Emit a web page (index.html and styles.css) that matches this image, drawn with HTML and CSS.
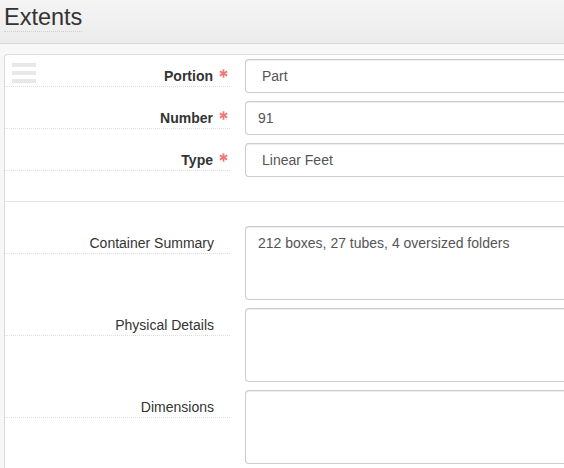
FILE: index.html
```html
<!DOCTYPE html>
<html lang="en">
<head>
<meta charset="utf-8">
<title>Extents</title>
<link rel="stylesheet" href="styles.css">
</head>
<body>
<header class="page-header">
  <h1 class="title"><span class="title-text">Extents</span></h1>
</header>
<main class="panel">
  <div class="drag-handle" aria-hidden="true">
    <span class="bar"></span><span class="bar"></span><span class="bar"></span>
  </div>
  <section class="group group-required">
    <div class="row">
      <label class="label label-required" for="portion">Portion<svg class="req" viewBox="0 0 10 10"><g stroke="currentColor" stroke-width="2"><line x1="5" y1="0.3" x2="5" y2="9.7"/><line x1="0.9" y1="2.65" x2="9.1" y2="7.35"/><line x1="0.9" y1="7.35" x2="9.1" y2="2.65"/></g></svg></label>
      <div class="control select-like" id="portion">Part</div>
    </div>
    <div class="row">
      <label class="label label-required" for="number">Number<svg class="req" viewBox="0 0 10 10"><g stroke="currentColor" stroke-width="2"><line x1="5" y1="0.3" x2="5" y2="9.7"/><line x1="0.9" y1="2.65" x2="9.1" y2="7.35"/><line x1="0.9" y1="7.35" x2="9.1" y2="2.65"/></g></svg></label>
      <div class="control" id="number">91</div>
    </div>
    <div class="row">
      <label class="label label-required" for="type">Type<svg class="req" viewBox="0 0 10 10"><g stroke="currentColor" stroke-width="2"><line x1="5" y1="0.3" x2="5" y2="9.7"/><line x1="0.9" y1="2.65" x2="9.1" y2="7.35"/><line x1="0.9" y1="7.35" x2="9.1" y2="2.65"/></g></svg></label>
      <div class="control select-like" id="type">Linear Feet</div>
    </div>
  </section>
  <section class="group group-details">
    <div class="row">
      <label class="label" for="summary">Container Summary</label>
      <div class="control area" id="summary">212 boxes, 27 tubes, 4 oversized folders</div>
    </div>
    <div class="row">
      <label class="label" for="physical">Physical Details</label>
      <div class="control area" id="physical"></div>
    </div>
    <div class="row row-last">
      <label class="label" for="dimensions">Dimensions</label>
      <div class="control area" id="dimensions"></div>
    </div>
  </section>
</main>
</body>
</html>
```
FILE: styles.css
```css
html, body {
  margin: 0;
  padding: 0;
}
body {
  background: #f7f7f7;
  font-family: "Liberation Sans", Arial, sans-serif;
  font-size: 14px;
  line-height: 20px;
  color: #333;
  overflow: hidden;
  width: 564px;
  height: 468px;
}
.page-header {
  height: 43px;
  width: 560px;
  border-bottom: 1px solid #d9d9d9;
  background: linear-gradient(#f4f4f4, #ececec);
  padding-left: 4px;
}
.title {
  margin: 0;
  padding-top: 4px;
  font-weight: normal;
  font-size: 23.5px;
  line-height: 27px;
  color: #333;
}
.title-text {
  display: inline-block;
  border-bottom: 1px dotted #cfcfcf;
}
.panel {
  position: relative;
  box-sizing: border-box;
  margin: 10px 0 0 4px;
  width: 560px;
  height: 414px;
  background: #fff;
  border: 1px solid #dcdcdc;
  border-right: none;
  border-bottom: none;
  border-radius: 4px 0 0 0;
  padding-top: 4px;
  overflow: hidden;
}
.drag-handle {
  position: absolute;
  left: 7px;
  top: 8px;
  display: flex;
  flex-direction: column;
  gap: 4px;
}
.bar {
  display: block;
  width: 24px;
  height: 4px;
  background: #e8e8e8;
}
.group-required {
  padding-bottom: 16px;
  border-bottom: 1px solid #e5e5e5;
}
.group-details {
  padding-top: 24px;
}
.row {
  display: grid;
  grid-template-columns: 225px 1fr;
  column-gap: 15px;
  align-items: start;
  margin-bottom: 8px;
}
.row-last {
  margin-bottom: 0;
}
.label {
  display: block;
  padding: 7px 16px 0 0;
  text-align: right;
  border-bottom: 1px dotted #dedede;
  line-height: 20px;
  color: #333;
}
.label-required {
  font-weight: bold;
  padding-right: 2px;
}
.req {
  display: inline-block;
  vertical-align: top;
  width: 9px;
  height: 9px;
  margin: 3px 0 0 6px;
  color: #ee7a77;
}
.control {
  box-sizing: border-box;
  height: 34px;
  padding: 6px 12px;
  border: 1px solid #ccc;
  border-right: none;
  border-radius: 4px 0 0 4px;
  box-shadow: inset 0 1px 1px rgba(0, 0, 0, 0.075);
  background: #fff;
  color: #555;
  line-height: 20px;
  white-space: nowrap;
}
.select-like {
  padding-left: 16px;
}
.area {
  height: 74px;
}
```
